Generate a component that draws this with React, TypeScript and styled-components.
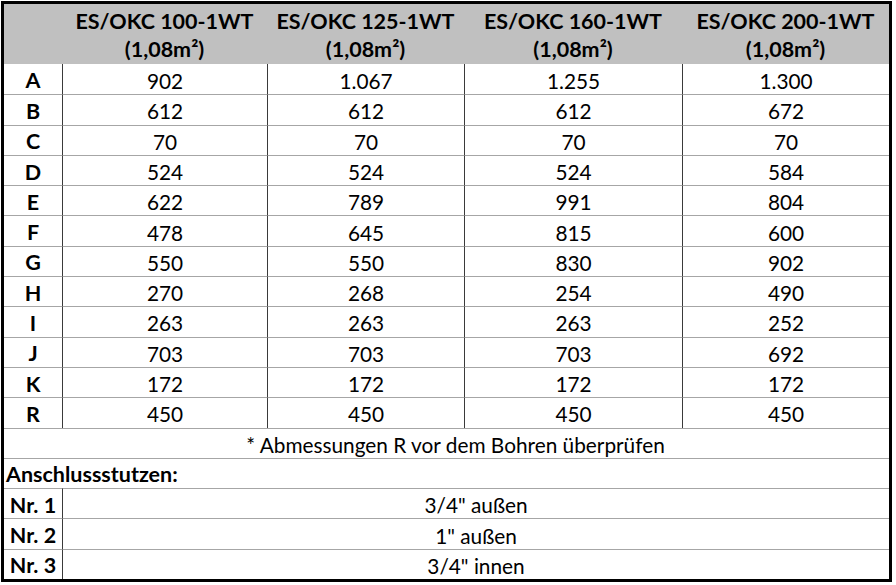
import React from 'react';
import styled, { createGlobalStyle } from 'styled-components';

const GlobalStyle = createGlobalStyle`
  html, body { margin: 0; padding: 0; background: #ffffff; }
  body { font-family: Lato, "Open Sans", "Liberation Sans", sans-serif; color: #000; }
  #root { display: block; }
`;

const Sheet = styled.div`
  box-sizing: border-box;
  margin: 1px 0 0 1px;
  width: 891px;
  height: 581px;
  border: 3px solid #000;
  display: grid;
  grid-template-columns: 58px 205px 197px 218px 207px;
  grid-template-rows: 60px repeat(17, 1fr);
  background: #fff;
`;

const Corner = styled.div`
  background: #c0c0c0;
`;

const HeadCell = styled.div`
  background: #c0c0c0;
  display: flex;
  flex-direction: column;
  align-items: center;
  justify-content: center;
  font-weight: 700;
  font-size: 21.5px;
  line-height: 28px;
  padding-top: 1px;
  white-space: nowrap;
`;

const Cell = styled.div<{ $top?: boolean }>`
  box-sizing: border-box;
  display: flex;
  align-items: center;
  justify-content: center;
  font-size: 20.8px;
  padding-top: 2px;
  white-space: nowrap;
  border-top: ${(p) => (p.$top ? '1px solid #a6a6a6' : 'none')};
`;

const LabelCell = styled(Cell)`
  font-weight: 700;
  font-size: 21.5px;
`;

const ValueCell = styled(Cell)`
  border-left: 1px solid #3a3a3a;
`;

const NoteCell = styled(Cell)`
  grid-column: 1 / -1;
  padding-left: 18px;
`;

const SectionCell = styled(Cell)`
  grid-column: 1 / -1;
  justify-content: flex-start;
  padding-left: 2px;
  font-weight: 700;
  font-size: 21.5px;
`;

const ConnValue = styled(ValueCell)`
  grid-column: 2 / -1;
`;

const models = ['ES/OKC 100-1WT', 'ES/OKC 125-1WT', 'ES/OKC 160-1WT', 'ES/OKC 200-1WT'];

const rows: [string, string[]][] = [
  ['A', ['902', '1.067', '1.255', '1.300']],
  ['B', ['612', '612', '612', '672']],
  ['C', ['70', '70', '70', '70']],
  ['D', ['524', '524', '524', '584']],
  ['E', ['622', '789', '991', '804']],
  ['F', ['478', '645', '815', '600']],
  ['G', ['550', '550', '830', '902']],
  ['H', ['270', '268', '254', '490']],
  ['I', ['263', '263', '263', '252']],
  ['J', ['703', '703', '703', '692']],
  ['K', ['172', '172', '172', '172']],
  ['R', ['450', '450', '450', '450']],
];

const connections: [string, string][] = [
  ['Nr. 1', '3/4" außen'],
  ['Nr. 2', '1" außen'],
  ['Nr. 3', '3/4" innen'],
];

export default function App() {
  return (
    <>
      <GlobalStyle />
      <Sheet>
        <Corner />
        {models.map((m) => (
          <HeadCell key={m}>
            <span>{m}</span>
            <span>(1,08m²)</span>
          </HeadCell>
        ))}
        {rows.map(([label, vals], i) => (
          <React.Fragment key={label}>
            <LabelCell $top={i > 0}>{label}</LabelCell>
            {vals.map((v, j) => (
              <ValueCell key={j} $top={i > 0}>
                {v}
              </ValueCell>
            ))}
          </React.Fragment>
        ))}
        <NoteCell $top>* Abmessungen R vor dem Bohren überprüfen</NoteCell>
        <SectionCell $top>Anschlussstutzen:</SectionCell>
        {connections.map(([label, val]) => (
          <React.Fragment key={label}>
            <LabelCell $top>{label}</LabelCell>
            <ConnValue $top>{val}</ConnValue>
          </React.Fragment>
        ))}
      </Sheet>
    </>
  );
}
